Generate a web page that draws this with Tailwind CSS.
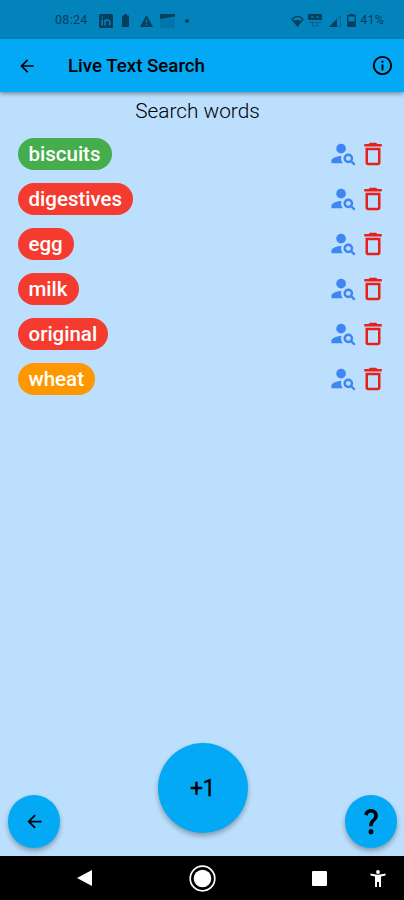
<!DOCTYPE html>
<html lang="en">
<head>
  <meta charset="UTF-8">
  <meta name="viewport" content="width=device-width, initial-scale=1.0">
  <title>Live Text Search</title>
  <script src="https://cdn.jsdelivr.net/npm/@tailwindcss/browser@4"></script>
</head>
<body class="h-screen flex flex-col overflow-hidden bg-[#bbdffc] font-['Roboto',sans-serif] text-black">
  <!-- Icons used more than once -->
  <svg class="hidden">
    <symbol id="icon-back" viewBox="0 0 24 24"><path d="M20 11H7.83l5.59-5.59L12 4l-8 8 8 8 1.41-1.41L7.83 13H20v-2z"/></symbol>
    <symbol id="icon-person-search" viewBox="0 0 24 24">
      <circle cx="10" cy="8" r="4"/>
      <path d="M10.35 14.01C7.62 13.91 2 15.27 2 18v2h9.54c-2.47-2.76-1.23-5.89-1.19-5.99zM19.43 18.02c.36-.59.57-1.28.57-2.02 0-2.21-1.79-4-4-4s-4 1.79-4 4 1.79 4 4 4c.74 0 1.43-.22 2.02-.57L20.59 22 22 20.59l-2.57-2.57zM16 18c-1.1 0-2-.9-2-2s.9-2 2-2 2 .9 2 2-.9 2-2 2z"/>
    </symbol>
    <symbol id="icon-delete" viewBox="0 0 24 24"><path d="M6 19c0 1.100.9 2 2 2h8c1.100 0 2-.9 2-2V7H6v12zM8 9h8v10H8V9zm7.500-5l-1-1h-5l-1 1H5v2h14V4h-3.500z"/></symbol>
  </svg>

  <!-- Status bar -->
  <div class="h-[39px] shrink-0 bg-[#0283bb] text-[#04405c] flex items-center justify-between pt-[2px] pl-[55px] pr-[20px] text-[12.500px]">
    <div class="flex items-center">
      <span class="w-[44px] tracking-[0.300px]">08:24</span>
      <svg class="w-[14px] h-[14px]" viewBox="0 0 14 14">
        <rect width="14" height="14" rx="1.500" fill="currentColor"/>
        <path d="M3.200 5.500v6M3.200 2.500v1.500M6 11.500v-6M6 8c0-2.600 4.800-2.800 4.800.2v3.300" fill="none" stroke="#0283bb" stroke-width="1.500"/>
      </svg>
      <svg class="w-[7px] h-[13px] ml-[9px]" viewBox="0 0 7 13" fill="currentColor"><path d="M2 0h3v1.500h2V13H0V1.500h2z"/></svg>
      <svg class="w-[13px] h-[12px] ml-[11px]" viewBox="0 0 13 12"><path d="M6.500 0L13 12H0z" fill="currentColor"/><path d="M6.500 4.500v3.500M6.500 9v1.500" stroke="#0283bb" stroke-width="1.200"/></svg>
      <svg class="w-[15px] h-[14px] ml-[7px]" viewBox="0 0 15 14"><path d="M0 4.500h15V14H0z" fill="#0273ac"/><path d="M0 0h15v2.500L0 5z" fill="currentColor"/></svg>
      <span class="w-1 h-1 ml-[10px] rounded-full bg-current"></span>
    </div>
    <div class="flex items-center">
      <svg class="w-[13px] h-[12px]" viewBox="0 0 13 12"><path d="M1 4.200Q6.500-1.500 12 4.200L6.500 11z" fill="none" stroke="currentColor" stroke-width="1.300"/><path d="M2.800 6.200q3.700-2.500 7.400 0L6.500 10.500z" fill="currentColor"/></svg>
      <svg class="w-[14px] h-[13px] ml-[4px]" viewBox="0 0 14 13"><path d="M0 0h14v6H0z" fill="currentColor"/><path d="M3 3h3M8 3h3" stroke="#0275a8" stroke-width="1.300"/><path d="M1 8.500h12M3 12h8M4.500 8.500V12M9 8.500V12" stroke="#04608c" stroke-width=".9"/></svg>
      <svg class="w-[12px] h-[12px] ml-[7px]" viewBox="0 0 12 12"><path d="M11.500.8v10.700H.8z" fill="none" stroke="#04608c" stroke-width=".8"/><path d="M8 4v8H0z" fill="currentColor"/></svg>
      <svg class="w-[9px] h-[13px] ml-[6px]" viewBox="0 0 9 13"><path d="M3 0h3v1.500H3zM.8 1.800h7.400v10.400H.8z" fill="none" stroke="currentColor" stroke-width="1.400"/><path d="M1 7.500h7V12H1z" fill="currentColor"/></svg>
      <span class="ml-[4px] tracking-[0.200px]">41%</span>
    </div>
  </div>

  <!-- App bar -->
  <header class="h-[53px] shrink-0 bg-[#03a9f4] flex items-center pl-[17px] pr-[10px] shadow-[0_2px_4px_rgba(0,0,0,0.350)]">
    <button><svg class="w-[20px] h-[20px]"><use href="#icon-back"/></svg></button>
    <h1 class="ml-[31px] pt-[2px] flex-1 text-[18.700px] font-medium">Live Text Search</h1>
    <button>
      <svg class="w-[23px] h-[23px]" viewBox="0 0 24 24"><path d="M11 7h2v2h-2zm0 4h2v6h-2zm1-9C6.480 2 2 6.480 2 12s4.480 10 10 10 10-4.480 10-10S17.520 2 12 2zm0 18c-4.410 0-8-3.590-8-8s3.590-8 8-8 8 3.590 8 8-3.590 8-8 8z"/></svg>
    </button>
  </header>

  <main class="flex-1 flex flex-col">
    <h2 class="h-[39px] pr-[9px] text-center text-[20.800px] leading-[38px] font-light">Search words</h2>
    <ul id="word-list"></ul>

    <!-- Floating buttons -->
    <div class="mt-auto mb-[8px] px-[8px] flex items-end justify-between">
      <button class="w-[52px] h-[53px] rounded-full bg-[#03a9f4] flex items-center justify-center shadow-[0_3px_5px_rgba(0,0,0,0.300)]">
        <svg class="w-[21px] h-[21px]"><use href="#icon-back"/></svg>
      </button>
      <button class="w-[90px] h-[90px] mb-[15px] pt-[2px] rounded-full bg-[#03a9f4] text-[23px] tracking-[-0.500px] shadow-[0_3px_5px_rgba(0,0,0,0.300)] [-webkit-text-stroke:0.300px_black]">+1</button>
      <button class="w-[52px] h-[53px] -mr-[1px] pr-[1px] pb-[2px] rounded-full bg-[#03a9f4] flex items-center justify-center shadow-[0_3px_5px_rgba(0,0,0,0.300)]">
        <svg class="w-[30px] h-[32px]" viewBox="0 0 24 24" preserveAspectRatio="none"><path d="M11.070 12.850c.77-1.390 2.250-2.210 3.110-3.440.91-1.290.4-3.700-2.180-3.700-1.690 0-2.520 1.280-2.870 2.340L6.540 6.960C7.250 4.830 9.180 3 11.990 3c2.350 0 3.960 1.070 4.780 2.410.7 1.150 1.110 3.300.03 4.900-1.200 1.770-2.350 2.310-2.970 3.450-.25.46-.35.76-.35 2.240h-2.890c-.01-.78-.13-2.050.48-3.150zM14 20c0 1.100-.9 2-2 2s-2-.9-2-2 .9-2 2-2 2 .9 2 2z"/></svg>
      </button>
    </div>
  </main>

  <!-- Android navigation bar -->
  <nav class="h-[44px] shrink-0 bg-black text-white flex items-center pl-[77px]">
    <svg class="w-[15px] h-[16px]" viewBox="0 0 15 16" fill="currentColor"><path d="M15 0v16L0 8z"/></svg>
    <svg class="w-[27px] h-[27px] ml-[97px]" viewBox="0 0 27 27"><circle cx="13.500" cy="13.500" r="12.300" fill="none" stroke="currentColor" stroke-width="1.700"/><circle cx="13.500" cy="13.500" r="8.800" fill="currentColor"/></svg>
    <span class="w-[15px] h-[15px] ml-[96px] rounded-[1px] bg-white"></span>
    <svg class="w-[16px] h-[17px] ml-[43px]" viewBox="0 0 16 17" fill="currentColor"><circle cx="8" cy="2" r="1.900"/><path d="M.5 3.500Q8 5.800 15.500 3.500v2L11 6.500V17H9v-5H7v5H5V6.500L.5 5.500z"/></svg>
  </nav>

  <script>
    const words = [
      { text: 'biscuits', color: 'bg-[#46ad4c]' },
      { text: 'digestives', color: 'bg-[#f53b2f]' },
      { text: 'egg', color: 'bg-[#f53b2f]' },
      { text: 'milk', color: 'bg-[#f53b2f]' },
      { text: 'original', color: 'bg-[#f53b2f]' },
      { text: 'wheat', color: 'bg-[#ff9800]' }
    ];

    const list = document.getElementById('word-list');
    words.forEach(word => {
      const item = document.createElement('li');
      item.className = "h-[45px] flex items-center pl-[17.500px] pr-[16px]";
      item.innerHTML = `
        <span class="h-[32px] px-[11px] rounded-full text-white text-[20.500px] leading-[32px] font-medium ${word.color}">${word.text}</span>
        <button class="ml-auto"><svg class="w-[29px] h-[29px] fill-[#3f86f4]"><use href="#icon-person-search"/></svg></button>
        <button><svg class="w-[30px] h-[30px] fill-[#e8201c]"><use href="#icon-delete"/></svg></button>
      `;
      list.append(item);
    });
  </script>
</body>
</html>
